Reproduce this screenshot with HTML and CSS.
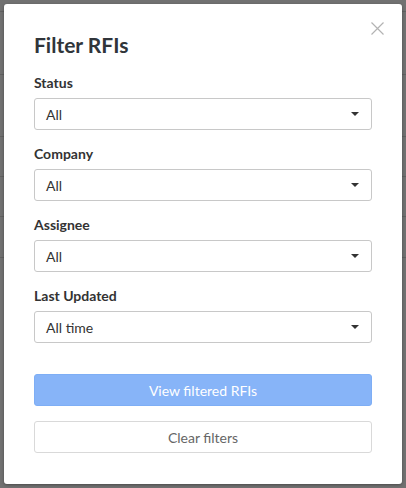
FILE: index.html
```html
<!DOCTYPE html>
<html lang="en">
<head>
<meta charset="utf-8">
<title>Filter RFIs</title>
<link rel="stylesheet" href="styles.css">
</head>
<body>
<div class="page">
  <div class="row row-a"></div>
  <div class="row row-b"></div>
  <div class="row row-c"></div>
  <div class="row row-d"></div>
  <div class="row row-d"></div>
  <div class="row row-e"></div>
</div>
<div class="modal" role="dialog" aria-labelledby="modal-title">
  <button class="close" aria-label="Close">
    <svg width="13" height="13" viewBox="0 0 13 13"><path d="M0.5 0.5L12.5 12.5M12.5 0.5L0.5 12.5" stroke="#b3b3b3" stroke-width="1.2" fill="none"/></svg>
  </button>
  <h1 class="title" id="modal-title">Filter RFIs</h1>
  <div class="fields">
    <div class="field">
      <div class="label">Status</div>
      <div class="select"><span>All</span><svg class="caret" width="8" height="4" viewBox="0 0 8 4"><polygon points="0,0 8,0 4,4" fill="#333"/></svg></div>
    </div>
    <div class="field">
      <div class="label">Company</div>
      <div class="select"><span>All</span><svg class="caret" width="8" height="4" viewBox="0 0 8 4"><polygon points="0,0 8,0 4,4" fill="#333"/></svg></div>
    </div>
    <div class="field">
      <div class="label">Assignee</div>
      <div class="select"><span>All</span><svg class="caret" width="8" height="4" viewBox="0 0 8 4"><polygon points="0,0 8,0 4,4" fill="#333"/></svg></div>
    </div>
    <div class="field">
      <div class="label">Last Updated</div>
      <div class="select"><span>All time</span><svg class="caret" width="8" height="4" viewBox="0 0 8 4"><polygon points="0,0 8,0 4,4" fill="#333"/></svg></div>
    </div>
  </div>
  <div class="actions">
    <button class="btn btn-primary">View filtered RFIs</button>
    <button class="btn btn-default">Clear filters</button>
  </div>
</div>
</body>
</html>
```
FILE: styles.css
```css
* { box-sizing: border-box; }
html, body { margin: 0; padding: 0; }
body {
  width: 406px;
  height: 488px;
  overflow: hidden;
  background: #717171;
  font-family: Lato, "Open Sans", sans-serif;
  position: relative;
}
.page { display: flex; flex-direction: column; }
.row { border-bottom: 1px solid #616161; }
.row-a { height: 12px; }
.row-b { height: 63px; }
.row-c { height: 62px; }
.row-d { height: 40px; }
.row-e { height: 41px; }

.modal {
  position: absolute;
  top: 4px;
  left: 4px;
  width: 398px;
  height: 480px;
  background: #fff;
  border-radius: 3px;
  box-shadow: 0 1px 3px rgba(0,0,0,0.35);
  padding: 28px 30px 31px;
  display: flex;
  flex-direction: column;
}
.close {
  position: absolute;
  top: 18px;
  right: 18px;
  width: 13px;
  height: 13px;
  padding: 0;
  border: 0;
  background: none;
  display: flex;
}
.title {
  margin: 0 0 17px;
  font-size: 21px;
  line-height: 25px;
  font-weight: 700;
  color: #30353a;
}
.fields { display: flex; flex-direction: column; gap: 15px; }
.field { display: flex; flex-direction: column; gap: 7px; }
.label {
  font-size: 14px;
  line-height: 17px;
  font-weight: 700;
  color: #333;
}
.select {
  height: 32px;
  border: 1px solid #c8c8c8;
  border-radius: 3px;
  padding: 0 12px 0 11px;
  display: flex;
  align-items: center;
  justify-content: space-between;
  font-size: 14px;
  line-height: 17px;
  color: #333;
}
.actions {
  margin-top: 31px;
  display: flex;
  flex-direction: column;
  gap: 15px;
}
.btn {
  height: 32px;
  border-radius: 3px;
  font-family: Lato, "Open Sans", sans-serif;
  font-size: 14px;
  line-height: 17px;
  padding: 0;
}
.btn-primary {
  background: #87b4f8;
  border: 1px solid #7eaef5;
  color: #fff;
}
.btn-default {
  background: #fff;
  border: 1px solid #d9d9d9;
  color: #666;
}
```
